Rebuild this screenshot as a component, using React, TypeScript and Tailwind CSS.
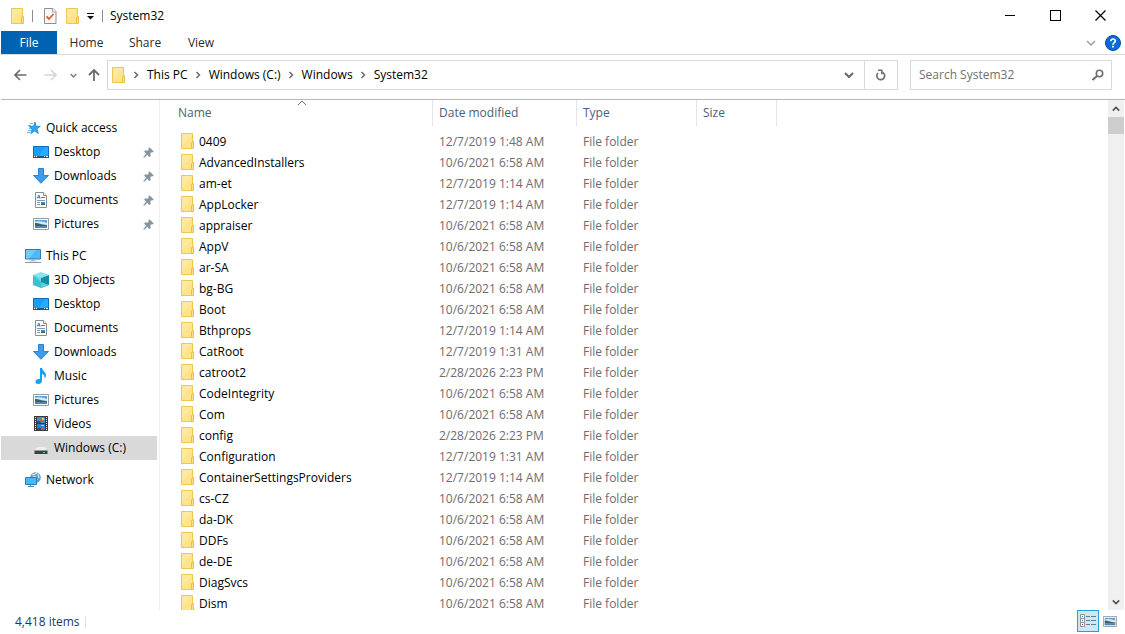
import { useState } from 'react';
import type { ComponentType, ReactNode } from 'react';

interface FolderEntry {
  name: string;
  modified: string;
}

interface NavEntry {
  label: string;
  icon: ComponentType;
  pinned?: boolean;
}

const ENTRIES: FolderEntry[] = [
  { name: '0409', modified: '12/7/2019 1:48 AM' },
  { name: 'AdvancedInstallers', modified: '10/6/2021 6:58 AM' },
  { name: 'am-et', modified: '12/7/2019 1:14 AM' },
  { name: 'AppLocker', modified: '12/7/2019 1:14 AM' },
  { name: 'appraiser', modified: '10/6/2021 6:58 AM' },
  { name: 'AppV', modified: '10/6/2021 6:58 AM' },
  { name: 'ar-SA', modified: '10/6/2021 6:58 AM' },
  { name: 'bg-BG', modified: '10/6/2021 6:58 AM' },
  { name: 'Boot', modified: '10/6/2021 6:58 AM' },
  { name: 'Bthprops', modified: '12/7/2019 1:14 AM' },
  { name: 'CatRoot', modified: '12/7/2019 1:31 AM' },
  { name: 'catroot2', modified: '2/28/2026 2:23 PM' },
  { name: 'CodeIntegrity', modified: '10/6/2021 6:58 AM' },
  { name: 'Com', modified: '10/6/2021 6:58 AM' },
  { name: 'config', modified: '2/28/2026 2:23 PM' },
  { name: 'Configuration', modified: '12/7/2019 1:31 AM' },
  { name: 'ContainerSettingsProviders', modified: '12/7/2019 1:14 AM' },
  { name: 'cs-CZ', modified: '10/6/2021 6:58 AM' },
  { name: 'da-DK', modified: '10/6/2021 6:58 AM' },
  { name: 'DDFs', modified: '10/6/2021 6:58 AM' },
  { name: 'de-DE', modified: '10/6/2021 6:58 AM' },
  { name: 'DiagSvcs', modified: '10/6/2021 6:58 AM' },
  { name: 'Dism', modified: '10/6/2021 6:58 AM' },
];

const CRUMBS = ['This PC', 'Windows (C:)', 'Windows', 'System32'];

/* ---------- Icons ---------- */

function FolderIcon() {
  return (
    <svg width="13" height="16" viewBox="0 0 13 16" className="shrink-0">
      <path d="M.5.5h11v15H.5z" fill="#ffe48c" stroke="#ecc84f" />
      <path d="M1 1h10L1 12z" fill="#ffe9a0" />
      <path d="M10.500 15.500V9.500l2-1v7z" fill="#ffe28a" stroke="#e9c14a" />
    </svg>
  );
}

function PropertiesIcon() {
  return (
    <svg width="13" height="16" viewBox="0 0 13 16">
      <path d="M.5.5h8.500l3 3v12H.5z" fill="#f8f8f8" stroke="#8c8f92" />
      <path d="M8.500.5v3.500h3.500" fill="#fff" stroke="#9b9ea1" />
      <path d="M2.500 8.500l2.500 2.500 4.500-5" fill="none" stroke="#ee5a24" strokeWidth="1.800" />
    </svg>
  );
}

function StarIcon() {
  return (
    <svg width="16" height="16" viewBox="0 0 16 16">
      <path d="M10 2l1.100 4.300h4.200l-3.400 2.500 1.500 4.700-3.700-2.500-3.900 2.600 1.300-4.600L4 6.300h4.500z" fill="#2ea6f0" stroke="#1788d4" strokeWidth=".8" />
      <path d="M5 3.500h3M3 5.500h3M4 8.500h2M3 10.500h3M2 12.500h3" stroke="#62b9ef" />
    </svg>
  );
}

function DesktopIcon() {
  return (
    <svg width="16" height="16" viewBox="0 0 16 16">
      <path d="M.5 2.500h15v11H.5z" fill="#12a0fb" stroke="#0b6fb8" />
      <path d="M15 3v7L7 13H5L12 3z" fill="#36b3ff" opacity=".6" />
      <path d="M0 12h16v2H0z" fill="#0d5a98" />
      <path d="M1 12.500h1M3 12.500h1M11 12.500h1M13 12.500h2" stroke="#fff" />
    </svg>
  );
}

function DownloadIcon() {
  return (
    <svg width="16" height="16" viewBox="0 0 16 16">
      <path d="M5.500.5h5v7h5L8 15.300.5 7.500h5z" fill="#3d9cea" stroke="#2a82d2" />
    </svg>
  );
}

function DocumentIcon() {
  return (
    <svg width="16" height="16" viewBox="0 0 16 16">
      <path d="M2.500.5h8l3 3v12h-11z" fill="#fdfdfd" stroke="#8b8e91" />
      <path d="M10.500.5v3h3" fill="#fff" stroke="#8b8e91" />
      <path d="M4 6.500l2-3.500 1 3.500M5 5.500h2" stroke="#2e8ad4" fill="none" />
      <path d="M8 5.500h4" stroke="#2e8ad4" />
      <path d="M4 8.500h8M4 10.500h3M4 12.500h3" stroke="#8096a8" />
      <path d="M8 10h4v2H8z" fill="#2e8ad4" />
      <path d="M8 12h4v1H8z" fill="#2f5f55" />
    </svg>
  );
}

function PictureIcon({ small }: { small?: boolean }) {
  return (
    <svg width={small ? 14 : 16} height={small ? 11 : 12} viewBox="0 0 16 12" preserveAspectRatio="none">
      <path d="M.5.5h15v11H.5z" fill="#fff" stroke="#989b9e" />
      <path d="M2 2h12v8H2z" fill="#5f9fe0" />
      <path d="M2 4c4-1.500 8 0 12 1v3H2z" fill="#d7ecf9" />
      <path d="M2 5c3-.2 6 1.500 12 2v1H2z" fill="#3a6460" />
      <path d="M2 8h12v2H2z" fill="#4f87b8" />
    </svg>
  );
}

function ComputerIcon() {
  return (
    <svg width="16" height="16" viewBox="0 0 16 16">
      <path d="M.5 1.500h15v9.500H.5z" fill="#4db8fa" stroke="#2c7cad" />
      <path d="M1 2h10L4 10.500H1z" fill="#85d0ff" opacity=".7" />
      <path d="M6.500 11.500h3v1.500h-3z" fill="#9aa6ae" />
      <path d="M4 13h8" stroke="#c4cbd0" />
      <path d="M0 14.500h16" stroke="#8c979f" />
    </svg>
  );
}

function CubeIcon() {
  return (
    <svg width="16" height="16" viewBox="0 0 16 16">
      <path d="M8 0l8 3-8 3-8-3z" fill="#8be3ec" />
      <path d="M0 3l8 3v10l-8-3z" fill="#3cc0d0" />
      <path d="M0 3l8 3v4z" fill="#70d7e2" />
      <path d="M16 3L8 6v10l8-3z" fill="#118fa5" />
      <path d="M8 16v-6l8 3z" fill="#5ed0dd" />
    </svg>
  );
}

function MusicIcon() {
  return (
    <svg width="16" height="16" viewBox="0 0 16 16">
      <path d="M7 0h2c.3 3 4.500 4 4 8-.2 1.300-.8 2-1.500 2.500C12 8 11 6.500 9 6v6.500C9 14.500 7.500 16 5.300 16 3.500 16 2.500 15 2.500 13.700c0-1.700 1.800-3 4.500-2.700z" fill="#14a0f5" />
    </svg>
  );
}

function VideoIcon() {
  return (
    <svg width="16" height="16" viewBox="0 0 16 16">
      <path d="M1 0h14v15H1z" fill="#3a3a3a" />
      <path d="M2.500 1v14M13.500 1v14" stroke="#f2f2f2" strokeDasharray="1 1" />
      <path d="M4 1h8v6H4z" fill="#3f8ede" />
      <path d="M4 8h8v6H4z" fill="#3579cf" />
      <path d="M4 5h4v2H4zM4 12h4v2H4z" fill="#28507e" />
      <path d="M9 2h2v2H9zM8 9h3v1H8z" fill="#f0c53b" />
      <path d="M7 4h4v2H7zM9 11h2v2H9z" fill="#c4642a" />
    </svg>
  );
}

function DriveIcon() {
  return (
    <svg width="16" height="16" viewBox="0 0 16 16">
      <path d="M4 7h8l2.500 4h-13z" fill="#eceeef" />
      <path d="M1.500 10.500h13v3.500h-13z" fill="#3d4144" />
      <path d="M10 12.500h2" stroke="#45e06b" />
    </svg>
  );
}

function NetworkIcon() {
  return (
    <svg width="16" height="16" viewBox="0 0 16 16">
      <circle cx="10.500" cy="5.500" r="5.300" fill="#5d9cc4" />
      <path d="M7 2.500c2 1 3-1 5-1.500M8 4.500l3 .5 1 3M13 2l1 4" stroke="#cfe8f6" fill="none" strokeWidth="1.300" />
      <path d="M.5 5.500h11v7H.5z" fill="#49b7f8" stroke="#2480b7" />
      <path d="M3 14.500h6M5.500 13v1" stroke="#4d91bd" />
    </svg>
  );
}

function PinIcon() {
  return (
    <svg width="11" height="11" viewBox="0 0 11 11">
      <path d="M6.500.5l4 4-1.200.8-.8-.2-1.400 1.500.4 2.300-1 1-2.200-2.200L1 10.500l-.5-.5L3.300 6.700 1.200 4.500l1-1 2.300.4L5.900 2.500l-.2-.8z" fill="#8494a0" stroke="#8494a0" strokeWidth=".4" />
    </svg>
  );
}

function Chevron({ className, d, size = 10 }: { className: string; d: string; size?: number }) {
  return (
    <svg width={size} height={size} viewBox="0 0 10 10" fill="none" stroke="currentColor" className={className}>
      <path d={d} />
    </svg>
  );
}

const DOWN = 'M1 3l4 4 4-4';
const UP = 'M1 7l4-4 4 4';
const RIGHT = 'M3.500 2l3 3-3 3';

/* ---------- Data for the navigation pane ---------- */

const QUICK_ACCESS: NavEntry[] = [
  { label: 'Desktop', icon: DesktopIcon, pinned: true },
  { label: 'Downloads', icon: DownloadIcon, pinned: true },
  { label: 'Documents', icon: DocumentIcon, pinned: true },
  { label: 'Pictures', icon: PictureIcon, pinned: true },
];

const THIS_PC: NavEntry[] = [
  { label: '3D Objects', icon: CubeIcon },
  { label: 'Desktop', icon: DesktopIcon },
  { label: 'Documents', icon: DocumentIcon },
  { label: 'Downloads', icon: DownloadIcon },
  { label: 'Music', icon: MusicIcon },
  { label: 'Pictures', icon: PictureIcon },
  { label: 'Videos', icon: VideoIcon },
  { label: 'Windows (C:)', icon: DriveIcon },
];

/* ---------- Sections ---------- */

function TitleBar() {
  return (
    <header className="flex h-[31px] items-center pl-[10px]">
      <FolderIcon />
      <span className="ml-2 h-3 w-px bg-[#8e8e8e]" />
      <button aria-label="Properties" className="ml-[11px]">
        <PropertiesIcon />
      </button>
      <button aria-label="New folder" className="ml-[9px]">
        <FolderIcon />
      </button>
      <button aria-label="Customize Quick Access Toolbar" className="ml-2">
        <svg width="7" height="8" viewBox="0 0 7 8">
          <path d="M0 1.500h7" stroke="#111" />
          <path d="M0 4h7L3.500 7.500z" fill="#111" />
        </svg>
      </button>
      <span className="ml-2 h-3 w-px bg-[#8e8e8e]" />
      <h1 className="ml-[7px]">System32</h1>
      <div className="ml-auto flex h-full pr-[2px]">
        <button aria-label="Minimize" className="flex w-[46px] items-center justify-center">
          <span className="h-px w-[10px] bg-black" />
        </button>
        <button aria-label="Maximize" className="flex w-[45px] items-center justify-center">
          <span className="size-[11px] border border-black" />
        </button>
        <button aria-label="Close" className="flex w-[45px] items-center justify-center">
          <svg width="11" height="11" viewBox="0 0 11 11">
            <path d="M.5.5l10 10M10.500.5l-10 10" stroke="#000" strokeWidth="1.200" />
          </svg>
        </button>
      </div>
    </header>
  );
}

function Ribbon() {
  return (
    <div className="flex h-6 items-stretch border-b border-[#dadbdc] text-[#2b2b2b]">
      <button className="w-14 bg-[#0063b1] text-white">File</button>
      <button className="w-[59px]">Home</button>
      <button className="w-[58px]">Share</button>
      <button className="w-[54px]">View</button>
      <div className="ml-auto flex items-center gap-[9px] pr-1">
        <button aria-label="Expand the Ribbon">
          <Chevron d={DOWN} className="stroke-[1.500] text-[#a0a0a0]" />
        </button>
        <button aria-label="Help">
          <svg width="16" height="16" viewBox="0 0 16 16">
            <circle cx="8" cy="8" r="7.500" fill="#0a6ad6" stroke="#0a4c9c" />
            <path d="M5.800 6.200c0-3 4.700-2.800 4.500-.1C10.200 7.600 8 7.700 8 9.700" fill="none" stroke="#fff" strokeWidth="1.700" />
            <path d="M7.100 10.800h1.800v1.800H7.100z" fill="#fff" />
          </svg>
        </button>
      </div>
    </div>
  );
}

function AddressRow() {
  return (
    <div className="flex h-[45px] items-center border-b border-[#b8b8b8] pr-[13px] pb-1 pl-[13px]">
      <button aria-label="Back">
        <svg width="13" height="12" viewBox="0 0 13 12" fill="none" stroke="#6b6b6b" strokeWidth="1.600">
          <path d="M12.500 6H1M6 1L1 6l5 5" />
        </svg>
      </button>
      <button aria-label="Forward" className="ml-[17px]">
        <svg width="13" height="12" viewBox="0 0 13 12" fill="none" stroke="#d5d5d5" strokeWidth="1.600">
          <path d="M.5 6H12M7 1l5 5-5 5" />
        </svg>
      </button>
      <button aria-label="Recent locations" className="ml-[13px]">
        <Chevron d={DOWN} size={7} className="stroke-2 text-[#7a7a7a]" />
      </button>
      <button aria-label="Up" className="ml-[11px]">
        <svg width="12" height="12" viewBox="0 0 12 12" fill="none" stroke="#6b6b6b" strokeWidth="1.800">
          <path d="M6 12V1M1 6l5-5 5 5" />
        </svg>
      </button>
      <div className="ml-[7px] flex h-[30px] flex-1 items-center border border-[#d9d9d9] pl-1">
        <FolderIcon />
        <nav className="ml-[6px] flex items-center">
          {CRUMBS.map((crumb) => (
            <div key={crumb} className="flex items-center">
              <Chevron d={RIGHT} className="stroke-[1.500] text-[#6a6a6a]" />
              <button className="pr-[5px] pl-[6px]">{crumb}</button>
            </div>
          ))}
        </nav>
        <button aria-label="Previous locations" className="ml-auto flex w-[30px] justify-center">
          <Chevron d={DOWN} className="stroke-2 text-[#6a6a6a]" />
        </button>
        <button aria-label="Refresh" className="flex h-full w-[33px] items-center justify-center border-l border-[#d9d9d9]">
          <svg width="12" height="12" viewBox="0 0 12 12" fill="none" stroke="#707070" strokeWidth="1.700">
            <path d="M7.300 3.200A3.900 3.900 0 1 1 3 4" />
            <path d="M3 1.300h3.800v4" strokeWidth="1.600" />
          </svg>
        </button>
      </div>
      <div className="ml-3 flex h-[30px] w-[202px] items-center border border-[#d9d9d9] pr-[7px] pl-2">
        <input
          type="search"
          aria-label="Search System32"
          placeholder="Search System32"
          className="min-w-0 flex-1 outline-none placeholder:text-[#717171]"
        />
        <svg width="12" height="12" viewBox="0 0 12 12" fill="none" stroke="#6f6f6f">
          <circle cx="7.500" cy="4.500" r="3.200" strokeWidth="1.600" />
          <path d="M5 7l-4.500 4" strokeWidth="2" />
        </svg>
      </div>
    </div>
  );
}

function NavRoot({ label, icon: Icon, children }: { label: string; icon: ComponentType; children?: ReactNode }) {
  return (
    <li>
      <button className="flex h-6 w-full items-center gap-[5px] pl-6">
        <Icon />
        {label}
      </button>
      {children && <ul>{children}</ul>}
    </li>
  );
}

function NavItem({ entry, selected, onSelect }: { entry: NavEntry; selected?: boolean; onSelect?: () => void }) {
  const Icon = entry.icon;
  return (
    <li>
      <button
        onClick={onSelect}
        className={`flex h-6 w-[156px] items-center gap-[5px] pr-[3px] pl-8 ${selected ? 'bg-[#d9d9d9]' : ''}`}
      >
        <Icon />
        <span className="mr-auto">{entry.label}</span>
        {entry.pinned && <PinIcon />}
      </button>
    </li>
  );
}

function NavigationPane() {
  const [selected, setSelected] = useState('Windows (C:)');

  return (
    <nav className="w-[159px] shrink-0 border-r border-[#f0f0f0] pt-4">
      <ul className="flex flex-col gap-2">
        <NavRoot label="Quick access" icon={StarIcon}>
          {QUICK_ACCESS.map((entry) => (
            <NavItem key={entry.label} entry={entry} />
          ))}
        </NavRoot>
        <NavRoot label="This PC" icon={ComputerIcon}>
          {THIS_PC.map((entry) => (
            <NavItem
              key={entry.label}
              entry={entry}
              selected={entry.label === selected}
              onSelect={() => setSelected(entry.label)}
            />
          ))}
        </NavRoot>
        <NavRoot label="Network" icon={NetworkIcon} />
      </ul>
    </nav>
  );
}

function FileTable() {
  return (
    <div className="min-w-0 flex-1 overflow-hidden">
      <table className="w-[617px] table-fixed border-separate border-spacing-0 text-left">
        <thead className="text-[#4c607a]">
          <tr className="h-[26px]">
            <th className="relative w-[273px] border-r border-[#e5e5e5] p-0 pl-[18px] font-normal">
              Name
              <Chevron d={UP} className="absolute -top-[2px] left-[137px] text-[#6d6d6d]" />
            </th>
            <th className="w-36 border-r border-[#e5e5e5] p-0 pl-[6px] font-normal">Date modified</th>
            <th className="w-[120px] border-r border-[#e5e5e5] p-0 pl-[6px] font-normal">Type</th>
            <th className="w-20 border-r border-[#e5e5e5] p-0 pl-[6px] font-normal">Size</th>
          </tr>
        </thead>
        <tbody className="text-[#6d6d6d] before:block before:h-[5px] before:content-['']">
          {ENTRIES.map((entry) => (
            <tr key={entry.name}>
              <td className="p-0 pl-[21px] text-black">
                <div className="flex h-[21px] items-start gap-[5px] pt-[2px]">
                  <FolderIcon />
                  <span className="leading-[17px]">{entry.name}</span>
                </div>
              </td>
              <td className="p-0 pl-[6px]">{entry.modified}</td>
              <td className="p-0 pl-[6px]">File folder</td>
              <td className="p-0" />
            </tr>
          ))}
        </tbody>
      </table>
    </div>
  );
}

function ScrollBar() {
  return (
    <div className="mr-px flex w-4 shrink-0 flex-col bg-[#f0f0f0]">
      <button aria-label="Scroll up" className="flex h-[17px] items-center justify-center">
        <Chevron d={UP} size={8} className="stroke-2 text-[#505050]" />
      </button>
      <div className="h-[17px] bg-[#cdcdcd]" />
      <button aria-label="Scroll down" className="mt-auto flex h-[17px] items-center justify-center">
        <Chevron d={DOWN} size={8} className="stroke-2 text-[#505050]" />
      </button>
    </div>
  );
}

function StatusBar() {
  return (
    <footer className="flex h-6 items-center pr-2 pl-[14px] text-[#1e395b]">
      <span>4,418 items</span>
      <span className="ml-[5px] h-3 w-px bg-[#e3e3e3]" />
      <button
        aria-label="Details view"
        className="ml-auto flex size-[22px] items-center justify-center self-start border border-[#26a0da] bg-[#cbe8f6]"
      >
        <svg width="16" height="14" viewBox="0 0 16 14" fill="none">
          <path d="M.5.5h4v4h-4zM.5 4.500h4v4h-4zM.5 8.500h4v4h-4z" fill="#fff" stroke="#8f9396" />
          <path d="M2 2.500h1M2 6.500h1" stroke="#3886c8" />
          <path d="M2 10.500h1" stroke="#d0342c" />
          <path d="M6 2.500h4M11 2.500h5M6 6.500h4M11 6.500h5M6 10.500h4M11 10.500h5" stroke="#6b7a84" />
        </svg>
      </button>
      <button aria-label="Large thumbnails view" className="ml-1 flex h-[22px] items-center self-start">
        <PictureIcon small />
      </button>
    </footer>
  );
}

export default function App() {
  return (
    <div className="flex h-screen flex-col overflow-hidden bg-white pl-px font-['Open_Sans','Noto_Sans',sans-serif] text-[12px] leading-4 text-black">
      <TitleBar />
      <Ribbon />
      <AddressRow />
      <main className="flex min-h-0 flex-1">
        <NavigationPane />
        <FileTable />
        <ScrollBar />
      </main>
      <StatusBar />
    </div>
  );
}
